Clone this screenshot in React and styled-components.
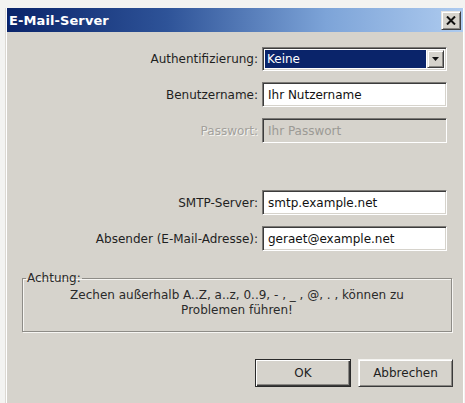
import React from "react";
import styled, { createGlobalStyle } from "styled-components";

const GlobalStyle = createGlobalStyle`
  html, body {
    margin: 0;
    padding: 0;
    background: #f3f3f1;
    overflow: hidden;
  }
  body {
    font-family: "DejaVu Sans", Tahoma, Verdana, sans-serif;
    font-size: 12px;
    color: #1e1e1e;
  }
`;

const Dialog = styled.div`
  margin: 8px 0 0 7px;
  width: 456px;
  height: 395px;
  background: #d6d3cc;
  box-shadow: -1px 0 0 #ffffff, -2px 0 0 #dcd9d3, 1px 0 0 #ffffff;
  display: flex;
  flex-direction: column;
`;

const TitleBar = styled.div`
  height: 24px;
  display: flex;
  align-items: center;
  justify-content: space-between;
  padding: 0 2px 0 2px;
  background: linear-gradient(90deg, #0a246a 0%, #2e5398 35%, #7da4d8 70%, #aecbef 100%);
`;

const Title = styled.span`
  color: #ffffff;
  font-weight: bold;
  font-size: 13px;
  letter-spacing: 0.1px;
`;

const raised = `
  background: #d6d3cc;
  border: 1px solid;
  border-color: #e8e6e2 #404040 #404040 #e8e6e2;
  box-shadow: inset 1px 1px 0 #ffffff, inset -1px -1px 0 #8a8884;
`;

const CloseButton = styled.button`
  ${raised}
  box-sizing: border-box;
  width: 20px;
  height: 19px;
  padding: 0;
  display: flex;
  align-items: center;
  justify-content: center;
  margin-top: 1px;
`;

const Body = styled.div`
  flex: 1;
  display: flex;
  flex-direction: column;
  padding-top: 15px;
`;

const FieldGrid = styled.div`
  display: grid;
  grid-template-columns: 251px 185px;
  column-gap: 4px;
  row-gap: 11px;
  margin-top: ${(p) => p.$offset || 0}px;
`;

const Label = styled.label`
  display: flex;
  align-items: center;
  justify-content: flex-end;
  white-space: nowrap;
  color: ${(p) => (p.$disabled ? "#a3a19c" : "#1f1f1f")};
  text-shadow: ${(p) => (p.$disabled ? "1px 1px 0 #f4f3f0" : "none")};
`;

const sunken = `
  box-sizing: border-box;
  border: 1px solid;
  border-color: #7c7a76 #ffffff #ffffff #7c7a76;
  box-shadow: inset 1px 1px 0 #3c3c3c, inset -1px -1px 0 #d6d3cc;
`;

const TextInput = styled.input`
  ${sunken}
  height: 25px;
  width: 185px;
  margin: 0;
  padding: 0 5px;
  font-family: inherit;
  font-size: 12px;
  color: #111;
  background: #ffffff;
  outline: none;

  &:disabled {
    background: #d6d3cc;
    color: #9c9a95;
    -webkit-text-fill-color: #9c9a95;
  }
`;

const Select = styled.div`
  ${sunken}
  height: 24px;
  width: 185px;
  background: #ffffff;
  display: flex;
  align-items: stretch;
  padding: 2px;
  gap: 1px;
`;

const SelectValue = styled.div`
  flex: 1;
  background: #0a246a;
  color: #ffffff;
  display: flex;
  align-items: center;
  padding-left: 2px;
`;

const DropButton = styled.div`
  ${raised}
  box-sizing: border-box;
  width: 17px;
  display: flex;
  align-items: center;
  justify-content: center;
`;

const Group = styled.fieldset`
  margin: 20px 0 0 15px;
  width: 430px;
  box-sizing: border-box;
  padding: 2px 6px 13px;
  border: 1px solid #8e8c87;
  box-shadow: 1px 1px 0 #f7f6f3, inset 1px 1px 0 #f7f6f3;
  text-align: center;
  line-height: 15px;
  color: #2a2a2a;
`;

const Legend = styled.legend`
  text-align: left;
  padding: 0 1px;
  margin-left: -3px;
  line-height: 15px;
  color: #2a2a2a;
`;

const ButtonRow = styled.div`
  display: flex;
  justify-content: flex-end;
  gap: 7px;
  padding-right: 10px;
  margin-top: 27px;
`;

const Button = styled.button`
  box-sizing: border-box;
  width: ${(p) => p.$width}px;
  height: 28px;
  font-family: inherit;
  font-size: 12px;
  color: #1f1f1f;
  padding: 0;
  background: #d6d3cc;
  border: 1px solid;
  border-color: ${(p) =>
    p.$default ? "#2a2a2a" : "#f4f3f0 #3a3a3a #3a3a3a #f4f3f0"};
  box-shadow: ${(p) =>
    p.$default
      ? "inset 1px 1px 0 #ffffff, inset -1px -1px 0 #3a3a3a, inset -2px -2px 0 #8a8884"
      : "inset 1px 1px 0 #ffffff, inset -1px -1px 0 #8a8884"};
`;

function CloseIcon() {
  return (
    <svg width="10" height="9" viewBox="0 0 10 9">
      <path d="M1 0.5 L9 8.5 M9 0.5 L1 8.5" stroke="#111" strokeWidth="2" />
    </svg>
  );
}

function DownArrow() {
  return (
    <svg width="7" height="4" viewBox="0 0 7 4">
      <path d="M0 0 H7 L3.5 4 Z" fill="#111" />
    </svg>
  );
}

export default function App() {
  return (
    <>
      <GlobalStyle />
      <Dialog>
        <TitleBar>
          <Title>E-Mail-Server</Title>
          <CloseButton aria-label="Schließen">
            <CloseIcon />
          </CloseButton>
        </TitleBar>
        <Body>
          <FieldGrid>
            <Label>Authentifizierung:</Label>
            <Select>
              <SelectValue>Keine</SelectValue>
              <DropButton>
                <DownArrow />
              </DropButton>
            </Select>
            <Label htmlFor="user">Benutzername:</Label>
            <TextInput id="user" defaultValue="Ihr Nutzername" />
            <Label htmlFor="pass" $disabled>
              Passwort:
            </Label>
            <TextInput id="pass" defaultValue="Ihr Passwort" disabled />
          </FieldGrid>
          <FieldGrid $offset={47}>
            <Label htmlFor="smtp">SMTP-Server:</Label>
            <TextInput id="smtp" defaultValue="smtp.example.net" />
            <Label htmlFor="from">Absender (E-Mail-Adresse):</Label>
            <TextInput id="from" defaultValue="geraet@example.net" />
          </FieldGrid>
          <Group>
            <Legend>Achtung:</Legend>
            Zechen außerhalb A..Z, a..z, 0..9, - , _ , @, . , können zu
            <br />
            Problemen führen!
          </Group>
          <ButtonRow>
            <Button $default $width={96}>
              OK
            </Button>
            <Button $width={95}>Abbrechen</Button>
          </ButtonRow>
        </Body>
      </Dialog>
    </>
  );
}
